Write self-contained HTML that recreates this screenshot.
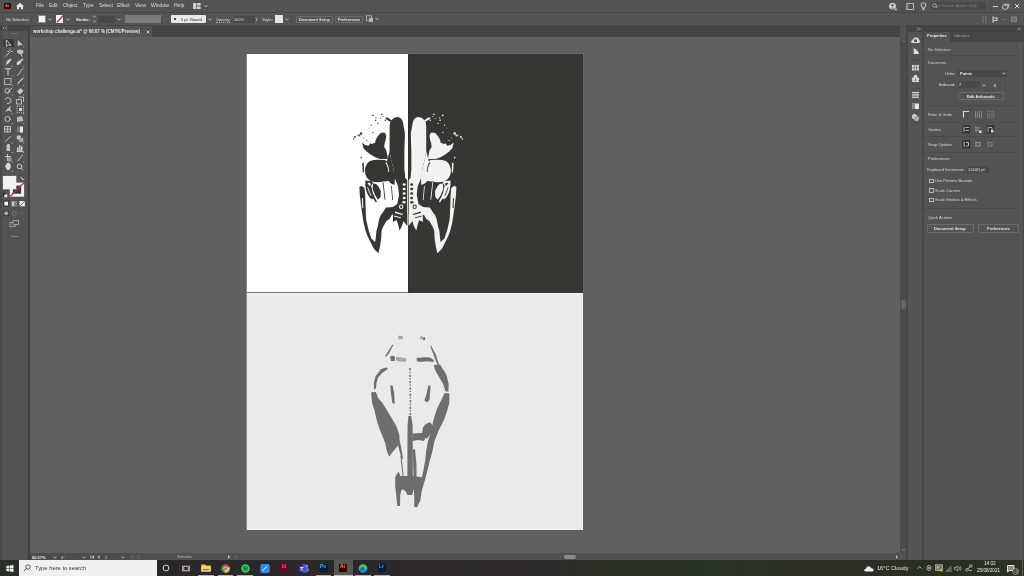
<!DOCTYPE html>
<html><head><meta charset="utf-8">
<style>
*{margin:0;padding:0;box-sizing:border-box}
html,body{width:1024px;height:576px;overflow:hidden;background:#535353;font-family:"Liberation Sans",sans-serif;color:#d6d6d6}
div,span,svg{position:absolute}
.t{white-space:nowrap;line-height:1;color:#dcdcdc;will-change:transform}
.m{font-size:5px;top:3.2px}
.c{font-size:4px;top:18.3px}
.b{font-weight:700}
.btn{border:1px solid #6b6b6b;border-radius:1px;background:#535353}
.fld{background:#494949}
.chev{width:4px;height:3px}
</style></head><body>
<!-- ===== MENU BAR ===== -->
<div style="left:0;top:0;width:1024px;height:13px;background:#535353;border-bottom:1px solid #474747"></div>
<div style="left:4px;top:3px;width:7px;height:6px;background:#3a0c04;border-radius:1px"></div>
<span class="t b" style="left:5.3px;top:4px;font-size:4px;color:#d8866a">Ai</span>
<svg style="left:15px;top:2px" width="10" height="8" viewBox="0 0 10 8"><path d="M5 0.8 L9 4.2 L8 4.2 L8 7.2 L6 7.2 L6 5.3 L4 5.3 L4 7.2 L2 7.2 L2 4.2 L1 4.2 Z" fill="#e6e6e6"/></svg>
<span class="t m" style="left:36px">File</span>
<span class="t m" style="left:49px">Edit</span>
<span class="t m" style="left:63px">Object</span>
<span class="t m" style="left:83px">Type</span>
<span class="t m" style="left:98.5px">Select</span>
<span class="t m" style="left:117px">Effect</span>
<span class="t m" style="left:135px">View</span>
<span class="t m" style="left:151px">Window</span>
<span class="t m" style="left:174px">Help</span>
<div style="left:188px;top:2px;width:1px;height:8px;background:#4a4a4a"></div>
<svg style="left:193px;top:3px" width="16" height="7" viewBox="0 0 16 7"><rect x="0" y="0" width="3" height="6" fill="#cfcfcf"/><rect x="3.6" y="0" width="4" height="2.6" fill="#cfcfcf"/><rect x="3.6" y="3.4" width="4" height="2.6" fill="#cfcfcf"/><path d="M11.5 2.3 L13 3.8 L14.5 2.3" stroke="#cfcfcf" stroke-width="0.8" fill="none"/></svg>
<!-- right side menubar -->
<svg style="left:888px;top:2px" width="10" height="9" viewBox="0 0 10 9"><circle cx="4.5" cy="4.2" r="3.3" fill="#dcdcdc"/><circle cx="4.5" cy="3.3" r="1.2" fill="#535353"/><path d="M2.3 6.6 Q4.5 4.4 6.7 6.6 Z" fill="#535353"/><circle cx="7.9" cy="7.4" r="0.9" fill="#dcdcdc"/></svg>
<div style="left:902px;top:1px;width:1px;height:10px;background:#4a4a4a"></div>
<svg style="left:906px;top:2.5px" width="9" height="8" viewBox="0 0 9 8"><rect x="0.5" y="0.5" width="7" height="6" fill="none" stroke="#bdbdbd" stroke-width="0.9"/><rect x="0.5" y="0.5" width="2" height="6" fill="#8a8a8a"/></svg>
<svg style="left:920px;top:2px" width="7" height="9" viewBox="0 0 7 9"><circle cx="3.5" cy="3.2" r="2.4" fill="none" stroke="#cfcfcf" stroke-width="0.9"/><rect x="2.5" y="6" width="2" height="2" fill="#cfcfcf"/></svg>
<div style="left:930.5px;top:2px;width:55px;height:7.5px;background:#494949;border-radius:1px"></div>
<svg style="left:932px;top:3px" width="8" height="6" viewBox="0 0 8 6"><circle cx="2.5" cy="2.5" r="1.8" fill="none" stroke="#bdbdbd" stroke-width="0.8"/><path d="M3.8 3.8 L5 5" stroke="#bdbdbd" stroke-width="0.8"/><path d="M5.5 2.5 L6.5 3.5 L7.5 2.5" stroke="#bdbdbd" stroke-width="0.6" fill="none"/></svg>
<span class="t" style="left:940.5px;top:3.6px;font-size:4.25px;color:#7c7c7c">Search Adobe Help</span>
<div style="left:989.5px;top:1px;width:1px;height:10px;background:#4a4a4a"></div>
<div style="left:993px;top:5.5px;width:4.5px;height:1.2px;background:#d0d0d0"></div>
<svg style="left:1002px;top:2.5px" width="8" height="7" viewBox="0 0 8 7"><rect x="0.7" y="2.2" width="5" height="4" rx="1" fill="none" stroke="#d0d0d0" stroke-width="0.9"/><path d="M2.2 1.2 H6.8 V4.6" fill="none" stroke="#d0d0d0" stroke-width="0.9"/></svg>
<svg style="left:1014px;top:2.5px" width="6" height="6" viewBox="0 0 6 6"><path d="M0.8 0.8 L5.2 5.2 M5.2 0.8 L0.8 5.2" stroke="#d8d8d8" stroke-width="1"/></svg>

<!-- ===== CONTROL BAR ===== -->
<div style="left:0;top:13px;width:1024px;height:12px;background:#545454"></div>
<div style="left:1.5px;top:14px;width:1px;height:10px;background:#474747"></div>
<span class="t c" style="left:6px;color:#e2e2e2">No Selection</span>
<div style="left:31px;top:14px;width:1px;height:10px;background:#4b4b4b"></div>
<div style="left:38px;top:15px;width:8px;height:8px;background:#f4f4f4;border:0.5px solid #888"></div>
<svg class="chev" style="left:48px;top:17.5px" viewBox="0 0 4 3"><path d="M0.4 0.6 L2 2.2 L3.6 0.6" stroke="#d0d0d0" stroke-width="0.8" fill="none"/></svg>
<div style="left:55.5px;top:15px;width:7.5px;height:8px;background:#f4f4f4"></div>
<svg style="left:55.5px;top:15px" width="8" height="8" viewBox="0 0 8 8"><path d="M1 7.3 L7 0.7" stroke="#d0223c" stroke-width="1.3"/></svg>
<svg class="chev" style="left:65.5px;top:17.5px" viewBox="0 0 4 3"><path d="M0.4 0.6 L2 2.2 L3.6 0.6" stroke="#d0d0d0" stroke-width="0.8" fill="none"/></svg>
<span class="t c b" style="left:75.5px;color:#eeeeee;font-size:4px">Stroke:</span>
<svg style="left:92px;top:15px" width="5" height="8" viewBox="0 0 5 8"><path d="M0.8 2.6 L2.5 1 L4.2 2.6 M0.8 5.4 L2.5 7 L4.2 5.4" stroke="#c8c8c8" stroke-width="0.8" fill="none"/></svg>
<div class="fld" style="left:98px;top:15.5px;width:16.5px;height:7px"></div>
<svg class="chev" style="left:117px;top:17.5px" viewBox="0 0 4 3"><path d="M0.4 0.6 L2 2.2 L3.6 0.6" stroke="#d0d0d0" stroke-width="0.8" fill="none"/></svg>
<div style="left:125px;top:15px;width:36px;height:8px;background:#7a7a7a"></div>
<svg class="chev" style="left:163.5px;top:17.5px" viewBox="0 0 4 3"><path d="M0.4 0.6 L2 2.2 L3.6 0.6" stroke="#6a6a6a" stroke-width="0.8" fill="none"/></svg>
<div style="left:171px;top:15px;width:35px;height:8px;background:#e8e8e8;border-radius:1px"></div>
<div style="left:173.7px;top:17.7px;width:2.6px;height:2.6px;background:#111;border-radius:50%"></div>
<span class="t c" style="left:180.5px;color:#2a2a2a">5 pt. Round</span>
<svg class="chev" style="left:207.5px;top:17.5px" viewBox="0 0 4 3"><path d="M0.4 0.6 L2 2.2 L3.6 0.6" stroke="#d0d0d0" stroke-width="0.8" fill="none"/></svg>
<span class="t c" style="left:215.5px">Opacity:</span>
<div style="left:215.5px;top:22px;width:14.5px;height:0;border-top:0.5px dotted #aaa"></div>
<div class="fld" style="left:233.5px;top:15.5px;width:21px;height:7px"></div>
<span class="t c" style="left:234px">100%</span>
<svg style="left:255px;top:16.5px" width="3" height="5" viewBox="0 0 3 5"><path d="M0.8 0.6 L2.2 2.5 L0.8 4.4" stroke="#cfcfcf" stroke-width="0.8" fill="none"/></svg>
<span class="t c" style="left:262px;font-size:4.4px">Style:</span>
<div style="left:275px;top:15px;width:8px;height:8px;background:#e6e6e6"></div>
<svg class="chev" style="left:285px;top:17.5px" viewBox="0 0 4 3"><path d="M0.4 0.6 L2 2.2 L3.6 0.6" stroke="#d0d0d0" stroke-width="0.8" fill="none"/></svg>
<div style="left:290.5px;top:14px;width:1px;height:10px;background:#4b4b4b"></div>
<div class="btn" style="left:295.5px;top:15.5px;width:37px;height:7.5px"></div>
<span class="t c b" style="left:298.7px;top:18.1px;color:#e0e0e0;font-size:3.9px">Document Setup</span>
<div class="btn" style="left:334.5px;top:15.5px;width:28.5px;height:7.5px"></div>
<span class="t c b" style="left:337.5px;top:18.1px;color:#e0e0e0;font-size:3.9px">Preferences</span>
<svg style="left:366px;top:15px" width="14" height="8" viewBox="0 0 14 8"><rect x="0.5" y="0.8" width="5" height="5" fill="none" stroke="#b8b8b8" stroke-width="0.8"/><rect x="3" y="3" width="4" height="4" fill="#b8b8b8"/><path d="M9.5 3 L11 4.5 L12.5 3" stroke="#c8c8c8" stroke-width="0.8" fill="none"/></svg>
<!-- right side control bar -->
<svg style="left:981px;top:15.5px" width="38" height="7" viewBox="0 0 38 7"><g fill="#7a7a7a"><rect x="1.5" y="0.5" width="1.5" height="1.5"/><rect x="4" y="0.5" width="1.5" height="1.5"/><rect x="1.5" y="2.8" width="1.5" height="1.5"/><rect x="4" y="2.8" width="1.5" height="1.5"/><rect x="1.5" y="5" width="1.5" height="1.5"/><rect x="4" y="5" width="1.5" height="1.5"/></g><g fill="#d0d0d0"><rect x="11.5" y="0.3" width="1.2" height="6.4"/><rect x="13" y="1.5" width="3" height="1"/><rect x="13" y="4" width="3" height="1"/><rect x="15.5" y="1.5" width="1" height="3.5"/></g><rect x="20" y="3" width="6" height="0.6" fill="#7a7a7a"/><rect x="30.5" y="1" width="5" height="4.5" fill="#6a6a6a" stroke="#8a8a8a" stroke-width="0.9"/></svg>

<!-- ===== TAB BAR ===== -->
<div style="left:30px;top:25px;width:870px;height:12px;background:#444444"></div>
<div style="left:30px;top:26px;width:122px;height:11px;background:#535353"></div>
<span class="t b" style="left:33px;top:30.2px;font-size:4.42px;color:#e8e8e8">workshop challenge.ai* @ 66.67 % (CMYK/Preview)</span>
<svg style="left:145.5px;top:29.8px" width="4" height="4" viewBox="0 0 4 4"><path d="M0.5 0.5 L3.5 3.5 M3.5 0.5 L0.5 3.5" stroke="#dcdcdc" stroke-width="0.8"/></svg>

<!-- ===== CANVAS ===== -->
<div id="canvas" style="left:30px;top:37px;width:870px;height:516px;background:#606060"></div>
<!-- vertical scrollbar -->
<div style="left:900px;top:37px;width:6px;height:516px;background:#4c4c4c"></div>
<svg style="left:900.5px;top:39px" width="5" height="4" viewBox="0 0 5 4"><path d="M0.8 3 L2.5 1.2 L4.2 3" stroke="#7a7a7a" stroke-width="0.7" fill="none"/></svg>
<div style="left:900.8px;top:299.6px;width:5px;height:9.6px;background:#656565;border-radius:2px"></div>
<svg style="left:900.5px;top:548px" width="5" height="4" viewBox="0 0 5 4"><path d="M0.8 1 L2.5 2.8 L4.2 1" stroke="#9a9a9a" stroke-width="0.7" fill="none"/></svg>
<!-- status/h-scroll bar -->
<div style="left:30px;top:553px;width:870px;height:7px;background:#505050"></div>
<div style="left:30px;top:553px;width:100px;height:7px;background:#4c4c4c"></div>
<span class="t" style="left:32px;top:555.6px;font-size:4px;color:#e6e6e6;font-weight:700">66.67%</span>
<svg class="chev" style="left:52.5px;top:556px" viewBox="0 0 4 3"><path d="M0.4 0.6 L2 2.2 L3.6 0.6" stroke="#d0d0d0" stroke-width="0.8" fill="none"/></svg>
<span class="t" style="left:61px;top:555.6px;font-size:4px;color:#d0d0d0">0°</span>
<svg class="chev" style="left:82px;top:556px" viewBox="0 0 4 3"><path d="M0.4 0.6 L2 2.2 L3.6 0.6" stroke="#d0d0d0" stroke-width="0.8" fill="none"/></svg>
<svg style="left:90px;top:555px" width="12" height="4" viewBox="0 0 12 4"><rect x="0.5" y="0.3" width="0.8" height="3.4" fill="#d0d0d0"/><path d="M4 0.3 L2 2 L4 3.7 Z M9.5 0.3 L7.5 2 L9.5 3.7 Z" fill="#d0d0d0"/></svg>
<span class="t" style="left:105px;top:555.6px;font-size:4px;color:#d0d0d0">2</span>
<svg class="chev" style="left:121px;top:556px" viewBox="0 0 4 3"><path d="M0.4 0.6 L2 2.2 L3.6 0.6" stroke="#d0d0d0" stroke-width="0.8" fill="none"/></svg>
<svg style="left:130px;top:555px" width="12" height="4" viewBox="0 0 12 4"><path d="M1 0.3 L3 2 L1 3.7 Z" fill="#6a6a6a"/><rect x="7" y="0.3" width="0.8" height="3.4" fill="#6a6a6a"/><rect x="9" y="0.3" width="0.8" height="3.4" fill="#6a6a6a"/></svg>
<span class="t" style="left:176.5px;top:555.9px;font-size:3.6px;color:#bdbdbd">Selection</span>
<svg style="left:226.5px;top:555px" width="12" height="4" viewBox="0 0 12 4"><path d="M1 0.3 L3 2 L1 3.7 Z" fill="#d0d0d0"/><path d="M9.5 0.6 L8 2 L9.5 3.4" stroke="#8a8a8a" stroke-width="0.6" fill="none"/></svg>
<div style="left:564px;top:555px;width:12px;height:4px;background:#8a8a8a;border-radius:2px"></div>
<svg style="left:894.5px;top:555px" width="4" height="4" viewBox="0 0 4 4"><path d="M1 0.3 L3 2 L1 3.7 Z" fill="#bdbdbd"/></svg>
<div style="left:900px;top:553px;width:6px;height:7px;background:#535353"></div>
<div style="left:906px;top:25px;width:2px;height:535px;background:#464646"></div>

<!-- ===== ARTBOARDS ===== -->
<div style="left:246px;top:53px;width:338px;height:1px;background:#5a5a5a"></div>
<div style="left:246px;top:54px;width:1px;height:477px;background:#8a8a8a"></div>
<div style="left:247px;top:54px;width:161px;height:238px;background:#ffffff"></div>
<div style="left:408px;top:53px;width:175px;height:1px;background:#6a6a6a"></div>
<div style="left:408px;top:54px;width:175px;height:238.5px;background:#363632"></div>
<div style="left:408px;top:54px;width:1px;height:238px;background:#2c2c2a"></div>
<div style="left:582px;top:54px;width:1px;height:238px;background:#30302d"></div>
<div style="left:583px;top:53px;width:1px;height:240px;background:#686868"></div>
<div style="left:247px;top:292px;width:161px;height:1px;background:#727272"></div>
<div style="left:247px;top:293px;width:336px;height:237px;background:#eaeaea"></div>
<div style="left:247px;top:293px;width:336px;height:1px;background:#f2f2f2"></div>
<div style="left:247px;top:529px;width:336px;height:1px;background:#f1f1f1"></div>
<div style="left:582px;top:293px;width:1px;height:237px;background:#f1f1f1"></div>
<div style="left:247px;top:530px;width:337px;height:1px;background:#5a5a5a"></div>
<!-- ===== ARTWORK ===== -->
<svg style="left:247px;top:53px" width="336" height="477" viewBox="247 53 336 477">
<defs>
<clipPath id="cl"><rect x="247" y="53" width="161" height="239"/></clipPath>
<clipPath id="cr"><rect x="408" y="53" width="175" height="239"/></clipPath>
<g id="sk"><g fill="CURFILL"><path d="M385.4,117.2 L388,117.8 L391.5,120.3 Q394,117 397.9,117 Q401.5,117.5 402.8,121.7 L404.9,132.8 L404.9,140 L404.5,150 L404.6,170 L405.5,178 L407.3,180 L407.3,226 L405.8,223 L403.4,221 L402,226 L399.5,230.6 L398,224 L396.5,220 L393,222 L393,211 L392.1,207.5 L397.3,204 L399,195 L398.2,186.7 L394.7,178 L394.6,185 L393.5,168.7 L391,159.4 L389.6,151 L389.6,125.8 L390.3,121.8 L388.2,120.6 L385.8,119 Z"/><path d="M386,207.5 L393,207 L393.5,212 L392.5,215 L391.7,215 L389.4,218.9 L386.25,221.2 L383.1,226.7 L381.6,230.6 L381.2,238.4 L380,246.2 L378.4,253.3 L374.5,246.2 L375.7,238.4 L376.5,230.6 L377.7,226.7 L378.4,222.8 L379.2,218.9 L380.5,215.5 L382.6,212.7 Z"/><path d="M362.1,142.6 L365.1,145.1 L368.6,145.7 L370.4,143.3 L371.6,144 L375.1,142.8 L375.7,139.8 L378.1,135.7 L380.4,133.3 Q382.8,131.7 385.2,133.1 L386.3,135.7 L385.7,139.8 L384.6,143.3 L384.2,146.9 L386.3,150.4 L387.5,156.3 L387.7,158.9 L380.4,158.9 L375.7,157.6 L371,154.8 L366.9,151.8 L363.5,148.3 Z"/><path d="M369.5,161.2 Q373.5,159.7 378,159.8 L385,159.9 Q389.5,162.5 389.6,170 Q389.4,178 384.5,181 Q377.5,183.4 370.5,181 Q365,177.5 364.9,170.5 Q365.2,164.5 369.5,161.2 Z"/><path d="M359.4,187 L361.5,185.8 L364.5,188 L365.2,195 L365.5,205 L365.8,213 L366,218 L366.7,222 L368.7,230.6 L371.4,238.4 L375.3,242.3 L378.4,253.3 L374,249 L370.6,242.3 L367.5,236 L365.5,230.6 L363.6,222.8 L362.4,215 L361,205 L359.8,195 Z"/><path d="M373,183.6 Q376.5,183 378.5,186.5 L380.8,191 L380.5,197 L378,199.7 L375,195 L372.6,189 Z"/><path d="M365.2,180.6 L372,181.2 L373,183 L371,186 L369,184.2 L367.5,187 L365.5,186 Z"/><path d="M368,188.8 L369.6,188.5 L373.5,195 L377,201.8 L375.8,202.6 L371.5,196 Z"/><path d="M365.5,184 L369,183.5 L371.5,187 L372.5,192 L374,197 L372,199.5 L369.5,197.5 L367,193 L365.8,189 Z"/><path d="M386.5,163 L389.6,151 L391,159.4 L393.5,168.7 L394.7,178 L394.6,185 L391,183.5 L388.5,181 L383.4,181.5 L386,178.5 L388.3,174.5 L389.4,170 Z"/><path d="M393,211 L396.5,210.5 L401,211.5 L405,213 L407.3,214 L407.3,226 L403.4,221 L399,219.5 L395,218.5 L393,215 Z"/><path d="M382.6,182 L383.4,182 L385.5,199.7 L384.6,199.7 Z"/><path d="M391,186 L391.8,186 L393,200 L392.2,200 Z"/><path d="M368,181.5 L372,182.3 L371,183.6 L368.5,183 Z"/><path d="M360,157 L361.8,156.8 L361.5,159 Z"/><path d="M362.2,163 L363.8,162.5 L364,172 L362.8,173 Z"/><circle cx="373.1" cy="115.4" r="0.8"/><circle cx="381.9" cy="114.4" r="0.8"/><circle cx="376" cy="117.8" r="0.6"/><circle cx="375.7" cy="120.3" r="0.8"/><circle cx="380.6" cy="118.2" r="0.5"/><circle cx="385.4" cy="120.3" r="0.8"/><circle cx="377.8" cy="123.4" r="0.7"/><circle cx="371.2" cy="125.1" r="0.7"/><circle cx="372.9" cy="132.4" r="0.6"/><circle cx="361.1" cy="133.5" r="1.2"/><circle cx="359.4" cy="135.6" r="1.0"/><circle cx="354.9" cy="137" r="0.9"/><circle cx="353.5" cy="139" r="0.7"/><circle cx="366.7" cy="140.4" r="0.6"/><circle cx="357.5" cy="135" r="0.6"/><circle cx="383" cy="116.5" r="0.5"/><circle cx="364" cy="138" r="0.5"/><circle cx="369" cy="128" r="0.4"/></g></g>
</defs>
<g clip-path="url(#cl)"><g fill="#363632"><path d="M385.4,117.2 L388,117.8 L391.5,120.3 Q394,117 397.9,117 Q401.5,117.5 402.8,121.7 L404.9,132.8 L404.9,140 L404.5,150 L404.6,170 L405.5,178 L407.3,180 L407.3,226 L405.8,223 L403.4,221 L402,226 L399.5,230.6 L398,224 L396.5,220 L393,222 L393,211 L392.1,207.5 L397.3,204 L399,195 L398.2,186.7 L394.7,178 L394.6,185 L393.5,168.7 L391,159.4 L389.6,151 L389.6,125.8 L390.3,121.8 L388.2,120.6 L385.8,119 Z"/><path d="M386,207.5 L393,207 L393.5,212 L392.5,215 L391.7,215 L389.4,218.9 L386.25,221.2 L383.1,226.7 L381.6,230.6 L381.2,238.4 L380,246.2 L378.4,253.3 L374.5,246.2 L375.7,238.4 L376.5,230.6 L377.7,226.7 L378.4,222.8 L379.2,218.9 L380.5,215.5 L382.6,212.7 Z"/><path d="M362.1,142.6 L365.1,145.1 L368.6,145.7 L370.4,143.3 L371.6,144 L375.1,142.8 L375.7,139.8 L378.1,135.7 L380.4,133.3 Q382.8,131.7 385.2,133.1 L386.3,135.7 L385.7,139.8 L384.6,143.3 L384.2,146.9 L386.3,150.4 L387.5,156.3 L387.7,158.9 L380.4,158.9 L375.7,157.6 L371,154.8 L366.9,151.8 L363.5,148.3 Z"/><path d="M369.5,161.2 Q373.5,159.7 378,159.8 L385,159.9 Q389.5,162.5 389.6,170 Q389.4,178 384.5,181 Q377.5,183.4 370.5,181 Q365,177.5 364.9,170.5 Q365.2,164.5 369.5,161.2 Z"/><path d="M359.4,187 L361.5,185.8 L364.5,188 L365.2,195 L365.5,205 L365.8,213 L366,218 L366.7,222 L368.7,230.6 L371.4,238.4 L375.3,242.3 L378.4,253.3 L374,249 L370.6,242.3 L367.5,236 L365.5,230.6 L363.6,222.8 L362.4,215 L361,205 L359.8,195 Z"/><path d="M373,183.6 Q376.5,183 378.5,186.5 L380.8,191 L380.5,197 L378,199.7 L375,195 L372.6,189 Z"/><path d="M365.2,180.6 L372,181.2 L373,183 L371,186 L369,184.2 L367.5,187 L365.5,186 Z"/><path d="M368,188.8 L369.6,188.5 L373.5,195 L377,201.8 L375.8,202.6 L371.5,196 Z"/><path d="M365.5,184 L369,183.5 L371.5,187 L372.5,192 L374,197 L372,199.5 L369.5,197.5 L367,193 L365.8,189 Z"/><path d="M386.5,163 L389.6,151 L391,159.4 L393.5,168.7 L394.7,178 L394.6,185 L391,183.5 L388.5,181 L383.4,181.5 L386,178.5 L388.3,174.5 L389.4,170 Z"/><path d="M393,211 L396.5,210.5 L401,211.5 L405,213 L407.3,214 L407.3,226 L403.4,221 L399,219.5 L395,218.5 L393,215 Z"/><path d="M382.6,182 L383.4,182 L385.5,199.7 L384.6,199.7 Z"/><path d="M391,186 L391.8,186 L393,200 L392.2,200 Z"/><path d="M368,181.5 L372,182.3 L371,183.6 L368.5,183 Z"/><path d="M360,157 L361.8,156.8 L361.5,159 Z"/><path d="M362.2,163 L363.8,162.5 L364,172 L362.8,173 Z"/><circle cx="373.1" cy="115.4" r="0.8"/><circle cx="381.9" cy="114.4" r="0.8"/><circle cx="376" cy="117.8" r="0.6"/><circle cx="375.7" cy="120.3" r="0.8"/><circle cx="380.6" cy="118.2" r="0.5"/><circle cx="385.4" cy="120.3" r="0.8"/><circle cx="377.8" cy="123.4" r="0.7"/><circle cx="371.2" cy="125.1" r="0.7"/><circle cx="372.9" cy="132.4" r="0.6"/><circle cx="361.1" cy="133.5" r="1.2"/><circle cx="359.4" cy="135.6" r="1.0"/><circle cx="354.9" cy="137" r="0.9"/><circle cx="353.5" cy="139" r="0.7"/><circle cx="366.7" cy="140.4" r="0.6"/><circle cx="357.5" cy="135" r="0.6"/><circle cx="383" cy="116.5" r="0.5"/><circle cx="364" cy="138" r="0.5"/><circle cx="369" cy="128" r="0.4"/></g><g fill="#ffffff"><ellipse cx="404.2" cy="184.5" rx="1.5" ry="1.3"/><ellipse cx="404.2" cy="189" rx="1.5" ry="1.3"/><ellipse cx="404.2" cy="193.5" rx="1.5" ry="1.3"/><ellipse cx="404.2" cy="198" rx="1.5" ry="1.3"/><ellipse cx="404" cy="202.3" rx="1.6" ry="1.3"/><path d="M404.9,138 L407.6,140 L407.6,290 L407.3,290 L407.3,180 L405.5,178 L404.6,170 Z"/><path d="M386.5,162 Q389,166 389,172 L388.2,172 Q388,166 385.5,163 Z"/><path d="M399,206.7 a2.2,2.2 0 1,0 4.4,0 a2.2,2.2 0 1,0 -4.4,0 Z M400,206.7 a1.2,1.2 0 1,1 2.4,0 a1.2,1.2 0 1,1 -2.4,0 Z"/><path d="M395,211.5 L403,214 L402.5,215 L395,213 Z"/><path d="M394,215.5 L401,217.5 L400.5,218.3 L394,216.5 Z"/><path d="M361.8,198 L362.8,198 L363.3,208 L362.3,208 Z"/><path d="M367.5,183 Q369.5,182 371,184 L369.6,186 Z"/><path d="M367.2,187.5 L368,187.3 L371.3,195.5 L370.6,196 Z"/></g></g>
<g clip-path="url(#cr)"><g transform="translate(815.8,0) scale(-1,1)"><g fill="#f2f2f2"><path d="M385.4,117.2 L388,117.8 L391.5,120.3 Q394,117 397.9,117 Q401.5,117.5 402.8,121.7 L404.9,132.8 L404.9,140 L404.5,150 L404.6,170 L405.5,178 L407.3,180 L407.3,226 L405.8,223 L403.4,221 L402,226 L399.5,230.6 L398,224 L396.5,220 L393,222 L393,211 L392.1,207.5 L397.3,204 L399,195 L398.2,186.7 L394.7,178 L394.6,185 L393.5,168.7 L391,159.4 L389.6,151 L389.6,125.8 L390.3,121.8 L388.2,120.6 L385.8,119 Z"/><path d="M386,207.5 L393,207 L393.5,212 L392.5,215 L391.7,215 L389.4,218.9 L386.25,221.2 L383.1,226.7 L381.6,230.6 L381.2,238.4 L380,246.2 L378.4,253.3 L374.5,246.2 L375.7,238.4 L376.5,230.6 L377.7,226.7 L378.4,222.8 L379.2,218.9 L380.5,215.5 L382.6,212.7 Z"/><path d="M362.1,142.6 L365.1,145.1 L368.6,145.7 L370.4,143.3 L371.6,144 L375.1,142.8 L375.7,139.8 L378.1,135.7 L380.4,133.3 Q382.8,131.7 385.2,133.1 L386.3,135.7 L385.7,139.8 L384.6,143.3 L384.2,146.9 L386.3,150.4 L387.5,156.3 L387.7,158.9 L380.4,158.9 L375.7,157.6 L371,154.8 L366.9,151.8 L363.5,148.3 Z"/><path d="M369.5,161.2 Q373.5,159.7 378,159.8 L385,159.9 Q389.5,162.5 389.6,170 Q389.4,178 384.5,181 Q377.5,183.4 370.5,181 Q365,177.5 364.9,170.5 Q365.2,164.5 369.5,161.2 Z"/><path d="M359.4,187 L361.5,185.8 L364.5,188 L365.2,195 L365.5,205 L365.8,213 L366,218 L366.7,222 L368.7,230.6 L371.4,238.4 L375.3,242.3 L378.4,253.3 L374,249 L370.6,242.3 L367.5,236 L365.5,230.6 L363.6,222.8 L362.4,215 L361,205 L359.8,195 Z"/><path d="M373,183.6 Q376.5,183 378.5,186.5 L380.8,191 L380.5,197 L378,199.7 L375,195 L372.6,189 Z"/><path d="M365.2,180.6 L372,181.2 L373,183 L371,186 L369,184.2 L367.5,187 L365.5,186 Z"/><path d="M368,188.8 L369.6,188.5 L373.5,195 L377,201.8 L375.8,202.6 L371.5,196 Z"/><path d="M365.5,184 L369,183.5 L371.5,187 L372.5,192 L374,197 L372,199.5 L369.5,197.5 L367,193 L365.8,189 Z"/><path d="M386.5,163 L389.6,151 L391,159.4 L393.5,168.7 L394.7,178 L394.6,185 L391,183.5 L388.5,181 L383.4,181.5 L386,178.5 L388.3,174.5 L389.4,170 Z"/><path d="M393,211 L396.5,210.5 L401,211.5 L405,213 L407.3,214 L407.3,226 L403.4,221 L399,219.5 L395,218.5 L393,215 Z"/><path d="M382.6,182 L383.4,182 L385.5,199.7 L384.6,199.7 Z"/><path d="M391,186 L391.8,186 L393,200 L392.2,200 Z"/><path d="M368,181.5 L372,182.3 L371,183.6 L368.5,183 Z"/><path d="M360,157 L361.8,156.8 L361.5,159 Z"/><path d="M362.2,163 L363.8,162.5 L364,172 L362.8,173 Z"/><circle cx="373.1" cy="115.4" r="0.8"/><circle cx="381.9" cy="114.4" r="0.8"/><circle cx="376" cy="117.8" r="0.6"/><circle cx="375.7" cy="120.3" r="0.8"/><circle cx="380.6" cy="118.2" r="0.5"/><circle cx="385.4" cy="120.3" r="0.8"/><circle cx="377.8" cy="123.4" r="0.7"/><circle cx="371.2" cy="125.1" r="0.7"/><circle cx="372.9" cy="132.4" r="0.6"/><circle cx="361.1" cy="133.5" r="1.2"/><circle cx="359.4" cy="135.6" r="1.0"/><circle cx="354.9" cy="137" r="0.9"/><circle cx="353.5" cy="139" r="0.7"/><circle cx="366.7" cy="140.4" r="0.6"/><circle cx="357.5" cy="135" r="0.6"/><circle cx="383" cy="116.5" r="0.5"/><circle cx="364" cy="138" r="0.5"/><circle cx="369" cy="128" r="0.4"/></g><g fill="#363632"><ellipse cx="404.2" cy="184.5" rx="1.5" ry="1.3"/><ellipse cx="404.2" cy="189" rx="1.5" ry="1.3"/><ellipse cx="404.2" cy="193.5" rx="1.5" ry="1.3"/><ellipse cx="404.2" cy="198" rx="1.5" ry="1.3"/><ellipse cx="404" cy="202.3" rx="1.6" ry="1.3"/><path d="M404.9,138 L407.6,140 L407.6,290 L407.3,290 L407.3,180 L405.5,178 L404.6,170 Z"/><path d="M386.5,162 Q389,166 389,172 L388.2,172 Q388,166 385.5,163 Z"/><path d="M399,206.7 a2.2,2.2 0 1,0 4.4,0 a2.2,2.2 0 1,0 -4.4,0 Z M400,206.7 a1.2,1.2 0 1,1 2.4,0 a1.2,1.2 0 1,1 -2.4,0 Z"/><path d="M395,211.5 L403,214 L402.5,215 L395,213 Z"/><path d="M394,215.5 L401,217.5 L400.5,218.3 L394,216.5 Z"/><path d="M361.8,198 L362.8,198 L363.3,208 L362.3,208 Z"/><path d="M367.5,183 Q369.5,182 371,184 L369.6,186 Z"/><path d="M367.2,187.5 L368,187.3 L371.3,195.5 L370.6,196 Z"/></g></g></g>
<g fill="#6e6e6e"><path d="M371.2,392.3 L375.9,392 L378,398 L382.2,402.5 L386.9,410.3 L391.6,418 L396.25,426 L397.8,430 L399.4,435.6 L399.4,443.4 L396,448 L393.1,451.25 L389.2,456.7 L386.9,451.25 L385.3,443.4 L382.2,435.6 L379,427.8 L376.7,420 L374.4,410.3 L372,402.5 Z"/><path d="M396,434 L397.5,434 L401,446 L403,459 L401.6,459 L398.5,447 Z"/><path d="M386.9,367.5 L388,369 L383,372 L378,377.5 L376.5,383 L376,388 L374.2,390 L373.8,383 L375.5,376.5 L379.5,371 Z"/><path d="M380,369.5 L386,367.5 L385,371 L381.5,372.5 Z"/><path d="M433.75,365 L440,364.5 L443.5,370 L446.3,374.4 L448.6,383.75 L448.5,391.5 L445.5,391.5 L443,383.75 L438.4,376 L435,370 Z"/><path d="M430.2,346 L431.3,346 L436,355 L439,365 L437.5,365 L434,356 Z"/><path d="M444.7,393 L449.4,393.5 L449.4,402.5 L447.4,410 L443.75,420.4 L438.5,430.8 L434.4,441.25 L432.3,451.7 L430.1,460 L427.5,470 L425,480 L424,483 L420.4,483 L421.5,480 L423.4,470 L425.3,460 L426,451.7 L428,441.25 L431.25,430.8 L433.3,420.4 L436.5,410 L440,402.5 Z"/><path d="M430.2,422.3 Q425,423.5 422.9,427.7 L421.9,434 Q423.5,438 427,438.5 L431.5,433 L433,426 Z"/><path d="M412.5,433.5 L422,433 L426,436.5 L424,441 L418,440 L412.5,441 Z"/><path d="M408.4,416 L411.2,416 L412.6,425 L412.8,450 L412.8,476 L407.4,476 L407.4,450 L407.6,425 Z"/><path d="M412.8,449.7 L415,449 L416.5,465 L416.5,477 L413.5,477 Z"/><path d="M395.2,477 L398.5,471.5 L400.5,476 L407.5,476 L413,476 L420.4,477 L424,478 L424,483 L421.5,492 L420.4,500.5 L417,507.2 L414.2,507 L414.3,497 L413.7,489 L412.2,495 L407.6,495 L405.5,491.5 L403.4,489.6 L401.5,490 L400.2,495 L400,506 L397.3,506 L396.2,495 L395.2,486 Z"/><path d="M400.4,456 L401.4,456 L403.7,476 L402.6,476 Z"/><path d="M416.6,358 L424,357.3 L430,357.5 L433.75,360 L433.5,362 L427,361.2 L420,361.9 L416.8,361 Z"/><path d="M390,356.5 L393.5,355.8 L395.2,357.5 L394.5,361 L391,361 Z"/><path d="M423,338 L425,338 L424.8,340 L423.2,340 Z"/><path d="M390.3,385.3 L392.5,385.5 L394.2,393 L394.7,404 L392.3,403 L391,394 Z"/><path d="M428.5,385.3 L430.6,386 L430,393 L429.5,400 L427,402.5 L424.4,400.5 L426.5,394 Z"/><path d="M392.5,344.5 L393.5,345 L388.5,354 L385.8,357 L385.2,356 Z"/><path d="M423,337.5 L425,337.3 L425.2,339.6 L423.2,339.8 Z"/></g><g fill="#a8a8a8"><path d="M398,335.8 L403,336 L402.5,339 L398.5,339.5 Z"/><path d="M420,336.5 L423,336.2 L422.5,339.5 L420.5,339.5 Z"/><path d="M396,357 L401,357.2 L406.4,358.5 L406,361.8 L399,361.5 L396,360.5 Z"/></g><path d="M410,368 L410.2,385 L410.4,400 L410.3,416" stroke="#7a7a7a" stroke-width="1.6" stroke-dasharray="2.5 1.2 1.2 1.5" fill="none"/>
</svg>
<!-- ===== END ARTWORK ===== -->
<!-- ===== TOOLBAR ===== -->
<div style="left:0;top:25px;width:30px;height:535px;background:#535353"></div>
<div style="left:0;top:25px;width:30px;height:6px;background:#454545"></div>
<svg style="left:2px;top:26px" width="6" height="4" viewBox="0 0 6 4"><path d="M2.5 0.5 L1 2 L2.5 3.5 M5 0.5 L3.5 2 L5 3.5" stroke="#bdbdbd" stroke-width="0.6" fill="none"/></svg>
<div style="left:27.8px;top:25px;width:2.2px;height:535px;background:#414141"></div>
<div style="left:0;top:31px;width:1.7px;height:529px;background:#4a4a4a"></div><div style="left:26.5px;top:31px;width:1.3px;height:529px;background:#4d4d4d"></div>
<div style="left:11px;top:32.5px;width:7px;height:0.8px;background:#6e6e6e"></div>
<div style="left:3px;top:39.2px;width:10.5px;height:8.2px;background:#393939"></div>
<svg style="left:0;top:0" width="30" height="250" viewBox="0 0 30 250">
<g fill="none" stroke="#d2d2d2" stroke-width="0.85" stroke-linejoin="round" stroke-linecap="round">
 <!-- r1 selection outline -->
 <path d="M6.3 40.3 L6.3 46.6 L7.8 45 L10.6 45.2 Z"/>
 <!-- r2 magic wand -->
 <path d="M5.5 56.5 L10 52"/>
 <path d="M10 49.6 L10 50.6 M11.6 51.5 L12.4 51.5 M8.6 51.5 L7.8 51.5"/>
 <!-- r4 line segment -->
 <path d="M17.5 75.5 L23 68.5"/>
 <!-- r5 rectangle -->
 <rect x="5" y="78.5" width="6" height="6" stroke="#bdbdbd"/>
 <!-- r6 shaper -->
 <circle cx="7.3" cy="91" r="2.4"/>
 <path d="M7.5 92.5 L12 88"/>
 <!-- r7 rotate -->
 <path d="M5.3 99.3 A3 3 0 1 1 7.5 103.5"/>
 <!-- r7 scale -->
 <rect x="17" y="99.5" width="4.5" height="4.5"/>
 <path d="M19 97 H23.5 V101.5"/>
 <!-- r9 shape builder -->
 <circle cx="7.5" cy="119" r="2.6"/>
 <!-- r10 mesh -->
 <rect x="5" y="126.5" width="5.5" height="5.5"/>
 <path d="M7.7 126.5 V132 M5 129.2 H10.5"/>
 <!-- r11 eyedropper -->
 <path d="M5.5 141.5 L10.5 136.5"/>
 <!-- r14 zoom -->
 <circle cx="19.5" cy="166.5" r="2.3"/>
 <path d="M21.2 168.2 L23 170"/>
 <!-- r13 slice -->
 <path d="M18 161 L22.5 155"/>
</g>
<g fill="#d4d4d4">
 <!-- r1 direct selection -->
 <path d="M17.8 40 L17.8 46.8 L19.5 45 L23 45.2 Z" fill="#c8c8c8"/>
 <rect x="23.3" y="46.3" width="0.9" height="0.9"/>
 <!-- r2 lasso -->
 <path d="M17 50.5 Q20 48.5 23.3 50.5 Q24 53 21.5 54 L22.8 56.5 L21.6 56.5 L20.5 54.2 Q17.5 54 17 52 Z" fill="#c0c0c0"/>
 <!-- r3 pen -->
 <path d="M5.5 65.5 L7 61 L10.5 58.5 L11.5 59.5 L9 63 Z"/>
 <path d="M16.5 64 Q17 61 20 60.5 L22.5 58.2 L23.5 59.2 L21.2 61.8 Q20.5 64.5 17.8 65.2 Z"/>
 <rect x="11.8" y="66.2" width="0.9" height="0.9"/><rect x="23.3" y="66.2" width="0.9" height="0.9"/>
 <!-- r4 T -->
 <path d="M5 68.2 H11 V69.2 H8.5 V75.4 H7.5 V69.2 H5 Z"/>
 <rect x="11.8" y="75.5" width="0.9" height="0.9"/><rect x="23.3" y="75.5" width="0.9" height="0.9"/>
 <!-- r5 brush -->
 <path d="M17 85 L18 82.5 L22.8 77.5 L23.6 78.3 L18.8 83.3 Z"/>
 <rect x="11.8" y="85" width="0.9" height="0.9"/><rect x="23.3" y="85" width="0.9" height="0.9"/>
 <!-- r6 eraser -->
 <path d="M17 91.5 L20.5 88 L23.5 91 L20 94.5 Z" fill="#c8c8c8"/>
 <rect x="11.8" y="94.5" width="0.9" height="0.9"/><rect x="23.3" y="94.5" width="0.9" height="0.9"/>
 <!-- r8 width -->
 <path d="M5 112 L8 108 L11 106 L10 109 L12 112 L8.5 110.5 Z" fill="#c0c0c0"/>
 <!-- r8 free transform -->
 <path d="M17 106 H23.5 M17 112.8 H23.5 M17 106 V112.8 M23.5 106 V112.8" stroke="#c8c8c8" stroke-width="0.8" stroke-dasharray="1.2 0.8" fill="none"/>
 <rect x="19" y="108" width="3" height="3" fill="#d0d0d0"/>
 <rect x="11.8" y="113.5" width="0.9" height="0.9"/><rect x="23.3" y="113.5" width="0.9" height="0.9"/>
 <!-- r9 perspective -->
 <path d="M17 117 L22 116 L23.5 121 L17 122 Z" fill="#b8b8b8"/>
 <rect x="11.8" y="123" width="0.9" height="0.9"/><rect x="23.3" y="123" width="0.9" height="0.9"/>
 <!-- r10 gradient -->
 <rect x="17" y="126.5" width="6" height="6" fill="#7a7a7a"/>
 <rect x="20" y="126.5" width="3" height="6" fill="#e6e6e6"/>
 <!-- r11 blend -->
 <rect x="16.8" y="135.5" width="4" height="4" fill="#c8c8c8"/>
 <rect x="19.3" y="138" width="4" height="4" fill="#a8a8a8"/>
 <rect x="11.8" y="142.5" width="0.9" height="0.9"/><rect x="23.3" y="142.5" width="0.9" height="0.9"/>
 <!-- r12 symbol sprayer -->
 <rect x="6.5" y="145" width="3.5" height="6" fill="#c0c0c0"/>
 <rect x="7.3" y="144" width="2" height="1.2"/>
 <!-- r12 graph -->
 <rect x="17" y="147.5" width="1.5" height="4"/><rect x="19" y="145" width="1.5" height="6.5"/><rect x="21" y="146.5" width="1.5" height="5"/><rect x="16.5" y="151" width="7" height="0.9"/>
 <rect x="11.8" y="152" width="0.9" height="0.9"/><rect x="23.3" y="152" width="0.9" height="0.9"/>
 <!-- r13 artboard -->
 <path d="M5 156 H11 V157 H5 Z M7 154 H8 V161 H7 Z" fill="#c8c8c8"/>
 <rect x="7.5" y="157.5" width="4" height="4" fill="#9a9a9a"/>
 <rect x="11.8" y="161.5" width="0.9" height="0.9"/><rect x="23.3" y="161.5" width="0.9" height="0.9"/>
 <!-- r14 hand -->
 <path d="M5 166 L6.5 164.5 L6.5 163 L8 163 L8 162.5 L9.5 163 L10.5 164.5 L10.8 167 L9.5 170 L7 170 Z" fill="#d8d8d8"/>
 <rect x="11.8" y="171" width="0.9" height="0.9"/>
</g>
<!-- fill / stroke -->
<rect x="9.8" y="182.6" width="14.3" height="14.1" fill="#f6f6f6"/>
<rect x="12.8" y="185.6" width="8.3" height="8.1" fill="#3a3a3a"/>
<path d="M10.3 196.3 L23.7 183" stroke="#d01e3a" stroke-width="1.3"/>
<rect x="2.9" y="175.9" width="13.4" height="13.4" fill="#f2f2f2"/>
<path d="M20 177 Q23 177 23 180 M21.3 178.3 L23 180 L24.3 178.6" fill="none" stroke="#cfcfcf" stroke-width="0.7"/>
<rect x="2.9" y="193" width="3" height="3" fill="#222"/><rect x="4.3" y="194.3" width="3" height="3" fill="#e6e6e6"/>
<rect x="3.3" y="200.6" width="5.8" height="5.9" fill="#2e2e2e"/>
<rect x="4.3" y="201.6" width="3.8" height="3.9" fill="#f4f4f4"/>
<rect x="11.7" y="201.3" width="5" height="5" fill="#c8c8c8"/>
<rect x="14.2" y="201.3" width="2.5" height="5" fill="#7a7a7a"/>
<rect x="19.5" y="201" width="5.3" height="5.3" fill="#f4f4f4"/>
<path d="M19.7 206.2 L24.7 201.2" stroke="#d01e3a" stroke-width="1"/>
<rect x="3.3" y="210.4" width="5.8" height="5.9" fill="#3a3a3a"/>
<circle cx="6.2" cy="213.3" r="2" fill="#a8a8a8"/>
<circle cx="14.3" cy="213.3" r="2" fill="none" stroke="#8a8a8a" stroke-width="0.7"/>
<circle cx="21.8" cy="213.3" r="1.6" fill="none" stroke="#6a6a6a" stroke-width="0.6"/>
<rect x="10" y="222.5" width="5.5" height="4" fill="none" stroke="#b0b0b0" stroke-width="0.8"/>
<rect x="13" y="220.5" width="5.5" height="4" fill="#535353" stroke="#b0b0b0" stroke-width="0.8"/>
<circle cx="12.2" cy="236.5" r="0.6" fill="#cfcfcf"/><circle cx="14.6" cy="236.5" r="0.6" fill="#cfcfcf"/><circle cx="17" cy="236.5" r="0.6" fill="#cfcfcf"/>
</svg>
<!-- ===== ICON STRIP + PROPS ===== -->
<div style="left:906px;top:25px;width:118px;height:6.5px;background:#454545"></div>
<svg style="left:915.5px;top:26.5px" width="5" height="4" viewBox="0 0 5 4"><path d="M1 0.5 L2.5 2 L1 3.5 M3 0.5 L4.5 2 L3 3.5" stroke="#bdbdbd" stroke-width="0.6" fill="none"/></svg>
<svg style="left:1016.5px;top:26.5px" width="5" height="4" viewBox="0 0 5 4"><path d="M2 0.5 L0.5 2 L2 3.5 M4 0.5 L2.5 2 L4 3.5" stroke="#bdbdbd" stroke-width="0.6" fill="none"/></svg>
<div style="left:908px;top:31.5px;width:14px;height:528.5px;background:#545454"></div>
<div style="left:922px;top:25px;width:2px;height:535px;background:#474747"></div>
<svg style="left:906px;top:30px" width="18" height="100" viewBox="906 30 18 100">
 <g fill="#d8d8d8">
  <!-- cc libraries -->
  <path d="M911.5 43 Q910.5 40.5 913 39.5 Q913.5 37 916 37.5 Q918.5 37 919 39.5 Q920.5 40.5 919.5 43 Z"/>
  <rect x="914" y="39.5" width="3" height="2.5" fill="#555"/>
  <!-- gradient triangle -->
  <path d="M912 47.5 L912 54 L919 54 Q917.5 49 912 47.5 Z" fill="#e0e0e0"/>
  <rect x="912" y="47.5" width="1.8" height="6.5" fill="#5a5a5a"/>
  <!-- swatches -->
  <rect x="912" y="65" width="7" height="5.5"/>
  <path d="M912 67.7 H919 M914.3 65 V70.5 M916.6 65 V70.5" stroke="#555" stroke-width="0.6"/>
  <!-- symbols club -->
  <circle cx="915.5" cy="76.5" r="1.8"/><circle cx="913.5" cy="79" r="1.8"/><circle cx="917.5" cy="79" r="1.8"/>
  <rect x="912" y="80.5" width="7" height="1.5"/>
  <!-- stroke -->
  <rect x="912" y="92" width="7" height="1.3"/><rect x="912" y="94.3" width="7" height="1.3"/><rect x="912" y="96.6" width="7" height="1.3"/>
  <!-- gradient -->
  <rect x="912" y="103.5" width="7" height="5.5" fill="#e6e6e6"/>
  <rect x="912" y="103.5" width="3" height="5.5" fill="#8a8a8a"/>
  <!-- appearance -->
  <circle cx="914.5" cy="116.5" r="2.6" fill="#cfcfcf"/><circle cx="916.5" cy="118.5" r="2.6" fill="#a8a8a8"/>
 </g>
 <g fill="#4a4a4a"><rect x="910" y="33" width="11" height="0.8"/><rect x="910" y="59.5" width="11" height="0.8"/><rect x="910" y="88" width="11" height="0.8"/><rect x="908" y="123.5" width="14.5" height="0.8"/></g>
</svg>
<div id="props" style="left:924px;top:31.5px;width:100px;height:528.5px;background:#535353"></div>
<div style="left:924px;top:31.5px;width:100px;height:10px;background:#464646"></div>
<div style="left:924px;top:31.5px;width:26px;height:10px;background:#535353"></div>
<div style="left:1018px;top:41.5px;width:4.5px;height:518.5px;background:#565656"></div><div style="left:1022.5px;top:31.5px;width:1.5px;height:528.5px;background:#4a4a4a"></div>
<span class="t b" style="left:927px;top:34.1px;font-size:4px;color:#eaeaea">Properties</span>
<span class="t" style="left:954px;top:34.1px;font-size:4px;color:#a5a5a5">Libraries</span>
<span class="t" style="left:928px;top:47.6px;font-size:4px;color:#d0d0d0">No Selection</span>
<div style="left:924px;top:55px;width:93px;height:0.8px;background:#4a4a4a"></div>
<span class="t" style="left:928px;top:60.8px;font-size:4px;color:#d8d8d8">Document</span>
<span class="t" style="left:945px;top:71.9px;font-size:4px;color:#d8d8d8">Units:</span>
<div class="fld" style="left:958px;top:69.8px;width:49px;height:7px"></div>
<span class="t b" style="left:959.5px;top:72.0px;font-size:4px;color:#e6e6e6">Points</span>
<svg class="chev" style="left:1001.5px;top:72px" viewBox="0 0 4 3"><path d="M0.4 0.6 L2 2.2 L3.6 0.6" stroke="#d8d8d8" stroke-width="0.8" fill="none"/></svg>
<span class="t" style="left:938.7px;top:83.4px;font-size:4px;color:#d8d8d8">Artboard:</span>
<div class="fld" style="left:958px;top:81.3px;width:22px;height:7px"></div>
<span class="t" style="left:959px;top:83.4px;font-size:4px;color:#dcdcdc">2</span>
<svg class="chev" style="left:982px;top:83.5px" viewBox="0 0 4 3"><path d="M0.4 0.6 L2 2.2 L3.6 0.6" stroke="#d8d8d8" stroke-width="0.8" fill="none"/></svg>
<svg style="left:992.5px;top:82.5px" width="12" height="5" viewBox="0 0 12 5"><path d="M2.5 0.5 L0.8 2.5 L2.5 4.5 Z" fill="#cfcfcf"/><path d="M9 0.8 L10.5 2.5 L9 4.2 Z" fill="#6a6a6a"/></svg>
<div class="btn" style="left:957.5px;top:92px;width:46.5px;height:8.4px"></div>
<span class="t b" style="left:966.8px;top:94.9px;font-size:4px;color:#e6e6e6">Edit Artboards</span>
<div style="left:924px;top:105.3px;width:93px;height:0.8px;background:#4a4a4a"></div>
<span class="t" style="left:927.7px;top:112.9px;font-size:4px;color:#d8d8d8">Ruler &amp; Grids</span>
<svg style="left:962px;top:110px" width="34" height="9" viewBox="962 110 34 9">
 <path d="M963.5 117.5 V111.5 H969" stroke="#d8d8d8" stroke-width="1.2" fill="none"/>
 <path d="M975.5 111 V118 M977.5 111 V118 M979.5 111 V118 M981.5 111 V118" stroke="#9a9a9a" stroke-width="0.7"/>
 <rect x="987.5" y="111.2" width="6.5" height="6.5" fill="none" stroke="#9a9a9a" stroke-width="0.7" stroke-dasharray="0.8 0.6"/>
 <path d="M987.5 113.4 H994 M987.5 115.5 H994 M989.7 111.2 V117.7 M991.8 111.2 V117.7" stroke="#8a8a8a" stroke-width="0.5" stroke-dasharray="0.8 0.6"/>
</svg>
<div style="left:924px;top:121.5px;width:93px;height:0.8px;background:#4a4a4a"></div>
<span class="t" style="left:927.7px;top:128.0px;font-size:4px;color:#d8d8d8">Guides</span>
<svg style="left:962px;top:125px" width="34" height="9" viewBox="962 125 34 9">
 <rect x="962.3" y="125.3" width="7.8" height="8" fill="#2e2e2e"/>
 <path d="M964 126.5 V132 M965.5 127.5 H969 M965.5 130.5 H969" stroke="#d8d8d8" stroke-width="0.8"/>
 <path d="M976 126.5 V132 M977 128 H980 M977 130.5 H979" stroke="#b0b0b0" stroke-width="0.8"/>
 <rect x="979" y="130.5" width="2.5" height="2.5" fill="#d8d8d8"/>
 <rect x="986.3" y="125.3" width="7.8" height="8" fill="#2e2e2e"/>
 <path d="M988 126.5 V132 M989 127.5 H992 V130" stroke="#d8d8d8" stroke-width="0.8" fill="none"/>
 <rect x="991" y="130" width="2.5" height="2.5" fill="#d8d8d8"/>
</svg>
<div style="left:924px;top:136px;width:93px;height:0.8px;background:#4a4a4a"></div>
<span class="t" style="left:927.7px;top:143.1px;font-size:4px;color:#d8d8d8">Snap Options</span>
<svg style="left:962px;top:140px" width="34" height="9" viewBox="962 140 34 9">
 <rect x="962.3" y="140.3" width="7.8" height="8" fill="#2e2e2e"/>
 <path d="M964.2 141.5 V147 M966 142.5 H968.5 V146 H966" stroke="#d8d8d8" stroke-width="0.8" fill="none"/>
 <path d="M976 141.5 V147 M977 142.5 H980 V146 H977" stroke="#b0b0b0" stroke-width="0.8" fill="none"/>
 <path d="M988 141.5 V147 M989 142.5 H992 V146 H989" stroke="#b0b0b0" stroke-width="0.8" fill="none" stroke-dasharray="1 0.5"/>
</svg>
<div style="left:924px;top:151.7px;width:93px;height:0.8px;background:#4a4a4a"></div>
<span class="t" style="left:927.7px;top:156.9px;font-size:4px;color:#d8d8d8">Preferences</span>
<span class="t" style="left:927.3px;top:167.6px;font-size:4px;color:#d8d8d8">Keyboard Increment:</span>
<div class="fld" style="left:967px;top:165.5px;width:22px;height:7px"></div>
<span class="t" style="left:968px;top:167.6px;font-size:4px;color:#e0e0e0">1.0001 pt</span>
<div style="left:929px;top:178.5px;width:4.5px;height:4.5px;border:0.8px solid #b8b8b8;border-radius:0.5px"></div>
<span class="t" style="left:935px;top:179.1px;font-size:4px;color:#d8d8d8">Use Preview Bounds</span>
<div style="left:929px;top:188px;width:4.5px;height:4.5px;border:0.8px solid #b8b8b8;border-radius:0.5px"></div>
<span class="t" style="left:935px;top:188.6px;font-size:4px;color:#d8d8d8">Scale Corners</span>
<div style="left:929px;top:197.5px;width:4.5px;height:4.5px;border:0.8px solid #b8b8b8;border-radius:0.5px"></div>
<span class="t" style="left:935px;top:198.1px;font-size:4px;color:#d8d8d8">Scale Strokes &amp; Effects</span>
<div style="left:924px;top:208px;width:93px;height:0.8px;background:#4a4a4a"></div>
<span class="t" style="left:927.5px;top:216.1px;font-size:4px;color:#d8d8d8">Quick Actions</span>
<div class="btn" style="left:927px;top:224px;width:47px;height:8.5px"></div>
<span class="t b" style="left:934.3px;top:227.0px;font-size:4px;color:#e6e6e6">Document Setup</span>
<div class="btn" style="left:978px;top:224px;width:40.5px;height:8.5px"></div>
<span class="t b" style="left:986.8px;top:227.0px;font-size:4px;color:#e6e6e6">Preferences</span>
<!-- ===== TASKBAR ===== -->
<div id="taskbar" style="left:0;top:560px;width:1024px;height:16px;background:linear-gradient(90deg,#283028 0%,#29292a 10%,#2c2729 30%,#2d2a2b 52%,#2b2d27 57%,#28321f 64%,#2b3523 70%,#2c3322 76%,#2e2e24 80%,#2b2f23 85%,#283022 92%,#2a3224 100%)"></div>
<svg style="left:6px;top:565px" width="8" height="7" viewBox="0 0 8 7"><path d="M0.3 1 L3.3 0.6 L3.3 3.2 L0.3 3.2 Z M3.9 0.5 L7.5 0 L7.5 3.2 L3.9 3.2 Z M0.3 3.8 L3.3 3.8 L3.3 6.4 L0.3 6 Z M3.9 3.8 L7.5 3.8 L7.5 7 L3.9 6.5 Z" fill="#f0f0f0"/></svg>
<div id="search" style="left:19px;top:560px;width:137.5px;height:16px;background:#f0f0f0"></div>
<svg style="left:23px;top:564px" width="8" height="8" viewBox="0 0 8 8"><circle cx="5" cy="3" r="2.2" fill="none" stroke="#333" stroke-width="0.8"/><path d="M3.4 4.6 L0.8 7.2" stroke="#333" stroke-width="0.9"/></svg>
<span class="t" style="left:35.2px;top:566px;font-size:5.8px;color:#3a3a3a">Type here to search</span>
<svg style="left:162px;top:564px" width="8" height="8" viewBox="0 0 8 8"><circle cx="4" cy="4" r="2.9" fill="none" stroke="#f0f0f0" stroke-width="0.9"/></svg>
<svg style="left:181.5px;top:564.5px" width="8" height="7" viewBox="0 0 8 7"><rect x="1.8" y="1.2" width="4.4" height="4.6" fill="none" stroke="#e8e8e8" stroke-width="0.8"/><path d="M0.4 0.4 V6.6 M7.6 0.4 V6.6" stroke="#e8e8e8" stroke-width="0.7"/></svg>
<!-- explorer -->
<svg style="left:201px;top:564px" width="10" height="8" viewBox="0 0 10 8"><path d="M0.3 0.5 H4 L4.8 1.4 H9.7 V7.6 H0.3 Z" fill="#f6c343"/><rect x="0.3" y="2.5" width="9.4" height="5.1" fill="#ffd75e"/><rect x="2" y="4.8" width="6" height="1.6" fill="#4a9ad6"/></svg>
<!-- chrome -->
<svg style="left:221px;top:563.5px" width="9" height="9" viewBox="0 0 9 9"><circle cx="4.5" cy="4.5" r="4.3" fill="#db4437"/><path d="M4.5 4.5 L0.8 2.4 A4.3 4.3 0 0 0 3.3 8.6 Z" fill="#0f9d58"/><path d="M4.5 4.5 L3.3 8.6 A4.3 4.3 0 0 0 8.6 3 Z" fill="#f4c20d"/><circle cx="4.5" cy="4.5" r="2" fill="#fff"/><circle cx="4.5" cy="4.5" r="1.5" fill="#4285f4"/></svg>
<!-- spotify -->
<svg style="left:241px;top:563.7px" width="9" height="9" viewBox="0 0 9 9"><circle cx="4.5" cy="4.5" r="4.3" fill="#1ed760"/><path d="M2 3.3 Q4.5 2.4 7 3.4 M2.4 4.8 Q4.5 4.1 6.6 4.9 M2.8 6.2 Q4.5 5.7 6.2 6.3" stroke="#191414" stroke-width="0.7" fill="none"/></svg>
<!-- blue app -->
<svg style="left:260px;top:563.5px" width="10" height="9" viewBox="0 0 10 9"><rect x="0.3" y="0" width="9.4" height="9" rx="2" fill="#2a8fe6"/><path d="M2.5 6.7 L7.2 2.2" stroke="#fff" stroke-width="1"/></svg>
<!-- indesign -->
<div style="left:280.2px;top:563.8px;width:7.6px;height:8.2px;background:#6a0626;border-radius:1px"></div>
<span class="t b" style="left:281.6px;top:565.3px;font-size:4.9px;color:#ff4d7e">Id</span>
<!-- teams -->
<svg style="left:298.5px;top:563.5px" width="10" height="9" viewBox="0 0 10 9"><circle cx="7.5" cy="2.2" r="1.6" fill="#7b83eb"/><rect x="5.5" y="3.8" width="4.2" height="4" rx="1.5" fill="#7b83eb"/><circle cx="5" cy="1.8" r="1.8" fill="#5059c9"/><rect x="2.5" y="3.3" width="6" height="5.5" rx="2" fill="#5059c9"/><rect x="0.3" y="2.3" width="5.2" height="5.2" rx="0.6" fill="#4b53bc"/><path d="M1.3 3.5 H4.5 M2.9 3.5 V6.6" stroke="#fff" stroke-width="0.8"/></svg>
<!-- ps -->
<div style="left:319.5px;top:563.8px;width:8.2px;height:8.2px;background:#001e36;border-radius:1px"></div>
<span class="t b" style="left:320.1px;top:565.3px;font-size:4.9px;color:#49b2ff">Ps</span>
<!-- ai active -->
<div style="left:334px;top:560px;width:18.5px;height:16px;background:#575555"></div>
<div style="left:339.2px;top:563.8px;width:8.2px;height:8.2px;background:#330000;border-radius:1px"></div>
<span class="t b" style="left:340.3px;top:565.3px;font-size:4.9px;color:#ffa21a">Ai</span>
<!-- edge -->
<svg style="left:357.5px;top:563.5px" width="10" height="9" viewBox="0 0 10 9"><circle cx="5" cy="4.5" r="4.3" fill="#1f8fd8"/><path d="M0.8 4.5 A4.3 4.3 0 0 1 9.3 4 Q8.5 6 6 5.5 Q3.5 5 3.8 3.5 Q2 4 2.2 6 Z" fill="#4cc25a"/><path d="M2.5 6.5 Q2 4.2 4 3.2 Q6.5 2.8 6.5 5" fill="#0c59a4"/></svg>
<!-- lr -->
<div style="left:377.9px;top:563.8px;width:8.2px;height:8.2px;background:#001e36;border-radius:1px"></div>
<span class="t b" style="left:379.4px;top:565.3px;font-size:4.9px;color:#49b2ff">Lr</span>
<!-- underlines -->
<div style="left:198px;top:574.8px;width:15.6px;height:1.2px;background:#9fb3c8"></div>
<div style="left:217.7px;top:574.8px;width:15.8px;height:1.2px;background:#9fb3c8"></div>
<div style="left:237px;top:574.8px;width:15.9px;height:1.2px;background:#9fb3c8"></div>
<div style="left:315.7px;top:574.8px;width:15.8px;height:1.2px;background:#9fb3c8"></div>
<div style="left:334px;top:574.8px;width:18.5px;height:1.2px;background:#b8c8d8"></div>
<div style="left:355px;top:574.8px;width:16px;height:1.2px;background:#9fb3c8"></div>
<div style="left:374px;top:574.8px;width:16px;height:1.2px;background:#9fb3c8"></div>
<!-- tray -->
<svg style="left:864px;top:565px" width="10" height="7" viewBox="0 0 10 7"><path d="M1.5 6.5 Q0 6.5 0.3 4.8 Q0.6 3.6 1.9 3.7 Q2.2 1.3 4.6 1.2 Q6.8 1.2 7.3 3.2 Q9.6 3.1 9.7 5 Q9.6 6.5 8 6.5 Z" fill="#e8eef5"/></svg>
<span class="t" style="left:876.8px;top:566.4px;font-size:5.6px;color:#e6e6e6">16°C  Cloudy</span>
<svg style="left:916.5px;top:566px" width="5" height="3" viewBox="0 0 5 3"><path d="M0.5 2.6 L2.5 0.6 L4.5 2.6" stroke="#e0e0e0" stroke-width="0.8" fill="none"/></svg>
<svg style="left:926px;top:564px" width="6" height="8" viewBox="0 0 6 8"><rect x="1" y="1.5" width="4" height="5" rx="2" fill="none" stroke="#cfcfcf" stroke-width="0.8"/><circle cx="3" cy="4" r="0.9" fill="#cfcfcf"/></svg>
<svg style="left:935px;top:564px" width="8" height="8" viewBox="0 0 8 8"><rect x="0.4" y="0.8" width="7" height="5.8" fill="#6a7480" stroke="#d8d8d8" stroke-width="0.6"/><rect x="1.5" y="2" width="3" height="2.5" fill="#c4a070"/><circle cx="6.2" cy="6.3" r="1.4" fill="#f0b400"/></svg>
<svg style="left:944.5px;top:564.5px" width="8" height="7" viewBox="0 0 8 7"><path d="M1 6.5 L6.5 1 M3 6.5 L6.5 3 M5 6.5 L6.5 5" stroke="#cfcfcf" stroke-width="0.7"/><path d="M0.8 6.2 H7.2" stroke="#9a9a9a" stroke-width="0.5"/></svg>
<svg style="left:953.5px;top:564.5px" width="8" height="7" viewBox="0 0 8 7"><path d="M0.5 2.5 H2 L4 0.8 V6.2 L2 4.5 H0.5 Z" fill="none" stroke="#d8d8d8" stroke-width="0.6"/><path d="M5.3 2 Q6.3 3.5 5.3 5 M6.3 1.2 Q7.8 3.5 6.3 5.8" stroke="#d8d8d8" stroke-width="0.5" fill="none"/></svg>
<svg style="left:965px;top:564px" width="8" height="8" viewBox="0 0 8 8"><circle cx="2" cy="5.8" r="1.3" fill="none" stroke="#d8d8d8" stroke-width="0.7"/><circle cx="5.8" cy="2" r="1.3" fill="none" stroke="#d8d8d8" stroke-width="0.7"/><path d="M2.8 5 L5 2.8 M4 6.5 H7" stroke="#d8d8d8" stroke-width="0.7"/></svg>
<span class="t" style="left:983.5px;top:562px;font-size:4.7px;color:#ececec">14:02</span>
<span class="t" style="left:976.9px;top:569.2px;font-size:4.6px;color:#ececec">25/08/2021</span>
<svg style="left:1007px;top:564.5px" width="12" height="10" viewBox="0 0 12 10"><path d="M0.5 0.5 H7 V5.5 H2.5 L0.5 7 Z" fill="#8a8a8a" stroke="#f2f2f2" stroke-width="0.9"/><circle cx="8.5" cy="6.5" r="3" fill="#2b3122" stroke="#cfcfcf" stroke-width="0.6"/><text x="7" y="8" font-size="3.2" fill="#e6e6e6" font-family="Liberation Sans">12</text></svg>
<div style="left:1021.5px;top:560px;width:0.8px;height:16px;background:#5a5a5a"></div>
</body></html>
